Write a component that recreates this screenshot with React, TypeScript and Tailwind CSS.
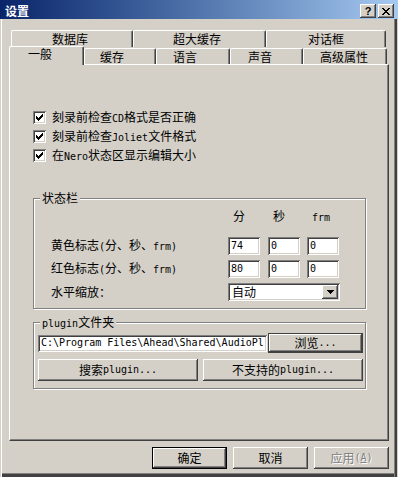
import React from 'react';

const raised =
  'bg-[#d4d0c8] shadow-[inset_-1px_-1px_#404040,inset_1px_1px_#fff,inset_-2px_-2px_#808080]';
const sunken =
  'bg-white shadow-[inset_1px_1px_#808080,inset_-1px_-1px_#fff,inset_2px_2px_#404040,inset_-2px_-2px_#d4d0c8]';
const mono = "font-['DejaVu_Sans_Mono',monospace] text-[10px]";
const tab =
  'flex border-t border-l border-r border-t-white border-l-white border-r-[#404040] rounded-t-[2px] shadow-[inset_-1px_0_#808080] bg-[#d4d0c8]';

function L({ children }: { children: React.ReactNode }) {
  return <span className={mono}>{children}</span>;
}

function CheckRow({ children }: { children: React.ReactNode }) {
  return (
    <div className="h-[19px] flex items-center">
      <div className={`w-[13px] h-[13px] ${sunken} flex items-center justify-center`}>
        <svg width="7" height="7" viewBox="0 0 7 7" shapeRendering="crispEdges">
          <path
            d="M0 2h1v3H0zM1 3h1v3H1zM2 4h1v3H2zM3 3h1v3H3zM4 2h1v3H4zM5 1h1v3H5zM6 0h1v3H6z"
            fill="#000"
          />
        </svg>
      </div>
      <span className="ml-[6px]">{children}</span>
    </div>
  );
}

function Group({
  label,
  className,
  children,
}: {
  label: React.ReactNode;
  className: string;
  children: React.ReactNode;
}) {
  return (
    <div className={`relative border border-[#808080] shadow-[inset_1px_1px_#fff,1px_1px_#fff] ${className}`}>
      <span className="absolute left-[6px] -top-[8px] px-[2px] bg-[#d4d0c8] leading-[14px]">{label}</span>
      {children}
    </div>
  );
}

function Field({ value, className = '' }: { value: string; className?: string }) {
  return (
    <div className={`w-[32px] h-[18px] ${sunken} pl-[3px] flex items-center ${className}`}>
      <L>{value}</L>
    </div>
  );
}

export default function App() {
  return (
    <div className="w-[398px] h-[477px] bg-[#d4d0c8] flex flex-col overflow-hidden text-[12px] leading-[14px] text-black font-['Noto_Sans_CJK_SC','Noto_Sans',sans-serif] select-none">
      {/* Title bar */}
      <div className="h-[19px] shrink-0 flex items-start pt-[4px] pl-[5px] pr-[4px] bg-linear-to-r from-[#0a246a] to-[#a6caf0]">
        <span className="text-white font-bold">设置</span>
        <div className="ml-auto flex gap-[2px]">
          <div className={`w-[16px] h-[14px] ${raised} flex items-center justify-center`}>
            <span className="font-['Liberation_Sans',sans-serif] font-bold text-[11px] leading-none">?</span>
          </div>
          <div className={`w-[16px] h-[14px] ${raised} flex items-center justify-center`}>
            <svg width="8" height="7" viewBox="0 0 8 7" shapeRendering="crispEdges">
              <path
                d="M0 0h2v1H0zM6 0h2v1H6zM1 1h2v1H1zM5 1h2v1H5zM2 2h4v1H2zM3 3h2v1H3zM2 4h4v1H2zM1 5h2v1H1zM5 5h2v1H5zM0 6h2v1H0zM6 6h2v1H6z"
                fill="#000"
              />
            </svg>
          </div>
        </div>
      </div>

      {/* Dialog body */}
      <div className="flex-1 flex flex-col pt-[11px] shadow-[inset_1px_0_#d4d0c8,inset_2px_0_#fff,inset_-1px_0_#d4d0c8,inset_-3px_0_#404040,inset_-4px_0_#808080,inset_0_-3px_#404040,inset_0_-4px_#808080]">
        {/* Tabs, back row */}
        <div className="flex ml-[11px] h-[17px]">
          <div className={`${tab} w-[122px] pl-[40px] items-center`}>数据库</div>
          <div className={`${tab} w-[133px] pl-[39px] items-center`}>超大缓存</div>
          <div className={`${tab} w-[120px] pl-[41px] items-center`}>对话框</div>
        </div>
        {/* Tabs, front row */}
        <div className="flex items-start ml-[9px] h-[17px]">
          <div className={`${tab} relative z-10 -mt-[1px] h-[19px] w-[75px] pl-[18px] pb-[4px] items-center`}>一般</div>
          <div className={`${tab} mt-[1px] h-[16px] w-[72px] pl-[15px] items-center`}>缓存</div>
          <div className={`${tab} mt-[1px] h-[16px] w-[74px] pl-[16px] items-center`}>语言</div>
          <div className={`${tab} mt-[1px] h-[16px] w-[73px] pl-[17px] items-center`}>声音</div>
          <div className={`${tab} mt-[1px] h-[16px] w-[84px] pl-[16px] items-center`}>高级属性</div>
        </div>

        {/* Tab page */}
        <div className="ml-[9px] w-[380px] h-[377px] shrink-0 flex flex-col pl-[23px] pt-[43px] border-t border-l border-r border-b border-t-white border-l-white border-r-[#404040] border-b-[#404040] shadow-[inset_-1px_-1px_#808080]">
          <CheckRow>刻录前检查<L>CD</L>格式是否正确</CheckRow>
          <CheckRow>刻录前检查<L>Joliet</L>文件格式</CheckRow>
          <CheckRow>在<L>Nero</L>状态区显示编辑大小</CheckRow>

          <Group label="状态栏" className="mt-[33px] w-[333px] h-[111px] shrink-0 pl-[17px] pt-[10px]">
            <div className="flex h-[14px]">
              <div className="w-[177px]" />
              <div className="w-[32px] pl-[5px]">分</div>
              <div className="w-[32px] ml-[8px] pl-[5px]">秒</div>
              <div className="w-[32px] ml-[7px] pl-[5px]">
                <L>frm</L>
              </div>
            </div>
            <div className="flex items-center h-[18px] mt-[14px]">
              <div className="w-[177px]">
                黄色标志<L>(</L>分、秒、<L>frm)</L>
              </div>
              <Field value="74" />
              <Field value="0" className="ml-[8px]" />
              <Field value="0" className="ml-[7px]" />
            </div>
            <div className="flex items-center h-[18px] mt-[5px]">
              <div className="w-[177px]">
                红色标志<L>(</L>分、秒、<L>frm)</L>
              </div>
              <Field value="80" />
              <Field value="0" className="ml-[8px]" />
              <Field value="0" className="ml-[7px]" />
            </div>
            <div className="flex items-center h-[18px] mt-[5px]">
              <div className="w-[177px]">水平缩放：</div>
              <div className={`w-[112px] h-[18px] ${sunken} p-[2px] flex items-center`}>
                <span className="pl-[2px] flex-1 bg-white">自动</span>
                <div className={`w-[16px] h-full ${raised} flex items-center justify-center`}>
                  <svg width="7" height="4" viewBox="0 0 7 4" shapeRendering="crispEdges">
                    <path d="M0 0h7v1H0zM1 1h5v1H1zM2 2h3v1H2zM3 3h1v1H3z" fill="#000" />
                  </svg>
                </div>
              </div>
            </div>
          </Group>

          <Group
            label={
              <>
                <L>plugin</L>文件夹
              </>
            }
            className="mt-[13px] w-[333px] h-[67px] shrink-0 pl-[4px] pt-[10px]"
          >
            <div className="flex items-center h-[20px]">
              <div className={`w-[229px] h-[17px] ${sunken} p-[2px] flex`}>
                <div className="flex-1 overflow-hidden whitespace-nowrap pl-[1px] flex items-center">
                  <span className={mono}>{'C:\\Program Files\\Ahead\\Shared\\AudioPl'}</span>
                </div>
              </div>
              <div className="ml-[1px] w-[95px] h-[20px] border border-[#404040]">
                <div className={`w-full h-full ${raised} flex items-center justify-center`}>
                  浏览<L>...</L>
                </div>
              </div>
            </div>
            <div className="flex mt-[6px] h-[22px]">
              <div className={`w-[160px] h-full ${raised} flex items-center justify-center`}>
                搜索<L>plugin...</L>
              </div>
              <div className={`w-[160px] ml-[5px] h-full ${raised} flex items-center justify-center`}>
                不支持的<L>plugin...</L>
              </div>
            </div>
          </Group>
        </div>

        {/* Dialog buttons */}
        <div className="flex mt-[6px] pl-[152px] gap-[6px]">
          <div className="w-[75px] h-[22px] border border-black">
            <div className={`w-full h-full ${raised} flex items-center justify-center`}>确定</div>
          </div>
          <div className={`w-[75px] h-[22px] ${raised} flex items-center justify-center`}>取消</div>
          <div className={`w-[75px] h-[22px] ${raised} flex items-center justify-center text-[#808080] [text-shadow:1px_1px_#fff]`}>
            应用<L>(</L>
            <span className={`${mono} underline`}>A</span>
            <L>)</L>
          </div>
        </div>
      </div>
    </div>
  );
}
